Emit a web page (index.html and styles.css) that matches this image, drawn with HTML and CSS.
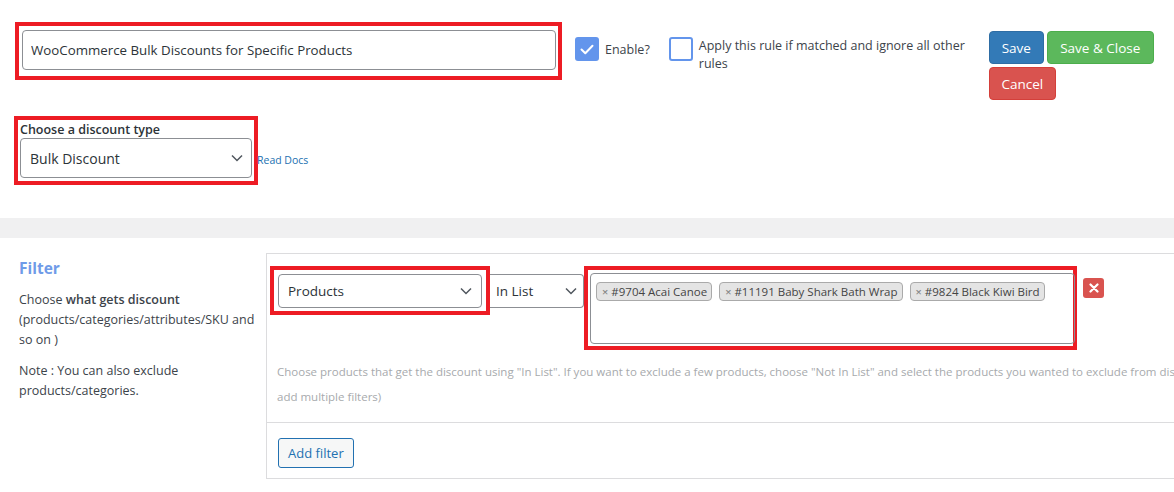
FILE: index.html
```html
<!DOCTYPE html>
<html lang="en">
<head>
<meta charset="utf-8">
<title>Rule editor</title>
<link rel="stylesheet" href="styles.css">
</head>
<body>
<div class="page">
  <div class="top-row">
    <div class="mark mark-title">
      <input class="text-input" type="text" value="WooCommerce Bulk Discounts for Specific Products">
    </div>
    <label class="check-item check-enable">
      <span class="box box-on">
        <svg viewBox="0 0 24 24" width="24" height="24"><path d="M6.5 12.5l3.8 3.8 7.2-7.6" fill="none" stroke="#fff" stroke-width="2" stroke-linecap="round" stroke-linejoin="round"/></svg>
      </span>
      <span class="check-text">Enable?</span>
    </label>
    <label class="check-item check-apply">
      <span class="box box-off"></span>
      <span class="check-text apply-text">Apply this rule if matched and ignore all other rules</span>
    </label>
    <div class="actions">
      <div class="actions-row">
        <button class="btn btn-save">Save</button>
        <button class="btn btn-close">Save &amp; Close</button>
      </div>
      <div class="actions-row">
        <button class="btn btn-cancel">Cancel</button>
      </div>
    </div>
  </div>

  <div class="type-row">
    <div class="mark mark-type">
      <div class="type-label">Choose a discount type</div>
      <div class="select select-type">
        <span>Bulk Discount</span>
        <svg class="chev" viewBox="0 0 12 8" width="12" height="8"><path d="M1 1.5l5 5 5-5" fill="none" stroke="#50575e" stroke-width="1.5"/></svg>
      </div>
    </div>
    <a class="docs" href="#">Read Docs</a>
  </div>

  <div class="band"></div>

  <div class="filter-section">
    <div class="filter-info">
      <h3 class="filter-title">Filter</h3>
      <p class="info-text">Choose <b>what gets discount</b> (products/categories/attributes/SKU and so on )</p>
      <p class="info-text">Note : You can also exclude products/categories.</p>
    </div>
    <div class="filter-panel">
      <div class="filter-row">
        <div class="mark mark-products">
          <div class="select select-products">
            <span>Products</span>
            <svg class="chev" viewBox="0 0 12 8" width="12" height="8"><path d="M1 1.5l5 5 5-5" fill="none" stroke="#50575e" stroke-width="1.5"/></svg>
          </div>
        </div>
        <div class="select select-list">
          <span>In List</span>
          <svg class="chev" viewBox="0 0 12 8" width="12" height="8"><path d="M1 1.5l5 5 5-5" fill="none" stroke="#50575e" stroke-width="1.5"/></svg>
        </div>
        <div class="mark mark-tags">
          <div class="multi">
            <span class="tag"><span class="tag-x">×</span>#9704 Acai Canoe</span>
            <span class="tag"><span class="tag-x">×</span>#11191 Baby Shark Bath Wrap</span>
            <span class="tag"><span class="tag-x">×</span>#9824 Black Kiwi Bird</span>
          </div>
        </div>
        <button class="remove">
          <svg viewBox="0 0 10 10" width="10" height="10"><path d="M1.5 1.5l7 7M8.5 1.5l-7 7" stroke="#fff" stroke-width="2.2" stroke-linecap="round"/></svg>
        </button>
      </div>
      <p class="help">Choose products that get the discount using "In List". If you want to exclude a few products, choose "Not In List" and select the products you wanted to exclude from discount. (You can add multiple filters)</p>
      <div class="panel-foot">
        <button class="btn-add">Add filter</button>
      </div>
    </div>
  </div>
</div>
</body>
</html>
```

FILE: styles.css
```css
* { box-sizing: border-box; }
html, body { margin: 0; padding: 0; overflow: hidden; background: #fff; }
body {
  font-family: "Open Sans", "Noto Sans", sans-serif;
  font-size: 13px;
  color: #3c434a;
}
.page { width: 1174px; height: 492px; overflow: hidden; }

.mark { border: 4px solid #ed1c24; }

/* top row */
.top-row { display: flex; align-items: flex-start; padding: 22px 0 0 15px; }
.mark-title { flex: none; width: 547px; height: 58px; padding: 4px 2px 4px 3px; }
.text-input {
  width: 534px; height: 40px; border: 1px solid #8c8f94; border-radius: 4px;
  padding: 0 8px; font: inherit; font-size: 13.3px; color: #2c3338; background: #fff;
}
.check-item { display: flex; align-items: flex-start; margin-top: 15px; flex: none; }
.check-enable { margin-left: 13px; }
.check-apply { margin-left: 19px; }
.box { width: 24px; height: 24px; border-radius: 3px; flex: none; display: block; }
.box-on { background: #6395ec; }
.box-on svg { display: block; }
.box-off { border: 2px solid #6395ec; background: #fff; }
.check-text { margin-left: 6px; line-height: 18px; font-size: 12.5px; color: #3c434a; }
.check-enable .check-text { margin-top: 4px; }
.apply-text { width: 272px; margin-top: 0; }
.actions { flex: none; margin-left: 18px; margin-top: 9px; display: flex; flex-direction: column; gap: 3px; }
.actions-row { display: flex; gap: 3px; }
.btn {
  border: 1px solid transparent; border-radius: 4px; color: #fff; font: inherit; font-size: 13.5px;
  height: 33px; padding: 0 8px; cursor: pointer;
}
.btn-save { background: #337ab7; border-color: #2e6da4; width: 55px; }
.btn-close { background: #5cb85c; border-color: #4cae4c; width: 107px; }
.btn-cancel { background: #d9534f; border-color: #d43f3a; width: 67px; height: 33px; }

/* discount type */
.type-row { display: flex; align-items: flex-start; padding: 16px 0 0 14px; }
.mark-type { flex: none; width: 244px; height: 69px; padding: 0 2px 0 2px; }
.type-label { font-weight: 600; font-size: 12.5px; line-height: 17px; color: #2c3338; margin-top: 1px; }
.select {
  display: flex; align-items: center; justify-content: space-between;
  border: 1px solid #8c8f94; border-radius: 4px; background: #fff; color: #2c3338;
}
.select-type { width: 232px; height: 40px; padding: 0 8px 0 9px; font-size: 14px; }
.chev { display: block; flex: none; }
.docs { font-size: 10.5px; color: #2271b1; text-decoration: none; margin-top: 37px; margin-left: -1px; }

.band { height: 20px; background: #f0f0f1; margin-top: 33px; }

/* filter section */
.filter-section { display: flex; align-items: flex-start; padding-top: 15px; }
.filter-info { flex: none; width: 266px; padding: 0 0 0 19px; }
.filter-title { margin: 5px 0 0; font-size: 15.5px; font-weight: 700; color: #6f9be8; line-height: 20px; }
.info-text { margin: 12px 0 0; font-size: 12.5px; line-height: 20px; color: #3c434a; }
.info-text:last-child { padding-right: 60px; }
.info-text + .info-text { margin-top: 11px; }
.info-text b { font-weight: 600; }

.filter-panel { flex: none; width: 1090px; height: 226px; border: 1px solid #dcdcde; padding-top: 12px; }
.filter-row { display: flex; align-items: flex-start; padding-left: 3px; }
.mark-products { flex: none; width: 220px; height: 49px; padding: 4px 4px 3px 4px; }
.select-products { width: 204px; height: 34px; padding: 0 9px; font-size: 13.5px; }
.select-list { flex: none; width: 94px; height: 34px; margin-top: 8px; padding: 0 6px 0 6px; font-size: 13.5px; border-left: none; border-radius: 0 4px 4px 0; }
.mark-tags { flex: none; width: 493px; height: 84px; padding: 3px 2px 2px 2px; }
.multi { width: 485px; height: 71px; border: 1px solid #8c8f94; border-radius: 4px; padding: 8px 5px; display: flex; align-items: flex-start; gap: 7px; }
.tag {
  display: inline-flex; align-items: center; height: 19px; padding: 0 4px 0 5px;
  background: #e4e4e4; border: 1px solid #aaa; border-radius: 4px; font-size: 11.5px; color: #444;
}
.tag-x { color: #888; font-size: 11px; margin-right: 3px; font-weight: 600; }
.remove {
  flex: none; width: 21px; height: 20px; margin: 12px 0 0 6px; background: #d9534f; border: none; border-radius: 3px;
  display: flex; align-items: center; justify-content: center; padding: 0;
}
.remove svg { display: block; }
.help { margin: 9px 0 0; padding: 0 10px; width: 1005px; font-size: 11.5px; line-height: 25px; color: #a7aaad; }
.panel-foot { border-top: 1px solid #dcdcde; margin-top: 13px; padding: 15px 11px 0; }
.btn-add {
  height: 30px; padding: 0 9px; border: 1px solid #2271b1; border-radius: 3px; background: #f6f7f7;
  color: #2271b1; font: inherit; font-size: 13px; cursor: pointer;
}
```
